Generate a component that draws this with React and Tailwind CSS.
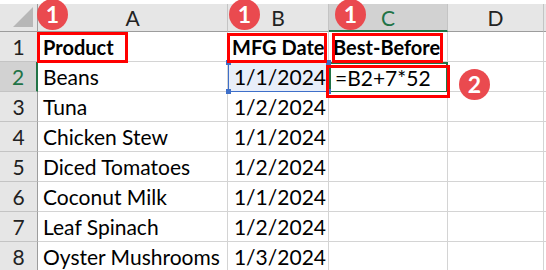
import React from "react";

const cols = ["A", "B", "C", "D", ""];
const rows = [
  ["Product", "MFG Date", "Best-Before", ""],
  ["Beans", "1/1/2024", "=B2+7*52", ""],
  ["Tuna", "1/2/2024", "", ""],
  ["Chicken Stew", "1/1/2024", "", ""],
  ["Diced Tomatoes", "1/2/2024", "", ""],
  ["Coconut Milk", "1/1/2024", "", ""],
  ["Leaf Spinach", "1/2/2024", "", ""],
  ["Oyster Mushrooms", "1/3/2024", "", ""],
];

function Badge({ n, className }) {
  return (
    <div
      className={
        "absolute w-[31px] h-[31px] rounded-full bg-[#ea4a4f] text-white flex items-center justify-center text-[23px] font-bold leading-none " +
        className
      }
    >
      {n}
    </div>
  );
}

export default function App() {
  return (
    <div className="relative w-[546px] h-[270px] overflow-hidden bg-white text-black font-['Lato',sans-serif]">
      <div className="h-[4px] bg-white" />
      <div className="grid grid-cols-[38px_190px_101px_119px_96px_40px] grid-rows-[28px_repeat(8,30px)]">
        <div className="relative bg-[#e6e6e6] border-r border-b border-[#9d9d9d]">
          <svg className="absolute right-[4px] bottom-[4px]" width="20" height="20" viewBox="0 0 20 20">
            <polygon points="20,0 20,20 0,20" fill="#b7b7b7" />
          </svg>
        </div>
        {cols.map((c, i) => (
          <div
            key={c + i}
            className={
              i === 2
                ? "bg-[#d2d2d2] border-r border-r-[#c4c4c4] border-b-2 border-b-[#217346] text-[#217346] flex items-center justify-center text-[21px] pt-[2px]"
                : "bg-[#e6e6e6] border-r border-r-[#c4c4c4] border-b border-b-[#9d9d9d] text-[#222] flex items-center justify-center text-[21px] pt-[1px]"
            }
          >
            {c}
          </div>
        ))}
        {rows.map((r, ri) => (
          <React.Fragment key={ri}>
            <div
              className={
                ri === 1
                  ? "bg-[#d2d2d2] border-r-2 border-r-[#217346] border-b border-b-[#c4c4c4] text-[#217346] flex items-center justify-center text-[21px]"
                  : "bg-[#e6e6e6] border-r border-r-[#9d9d9d] border-b border-b-[#c4c4c4] text-[#222] flex items-center justify-center text-[21px]"
              }
            >
              {ri + 1}
            </div>
            <div className={"border-r border-b border-[#d4d4d4] flex items-center pl-[5px] whitespace-nowrap " + (ri === 0 ? "font-bold text-[20px]" : "text-[21px]")}>
              {r[0]}
            </div>
            <div
              className={
                "relative border-r border-b flex items-center whitespace-nowrap " +
                (ri === 0
                  ? "font-bold text-[20px] pl-[4px] border-[#d4d4d4]"
                  : ri === 1
                  ? "text-[21px] justify-end pr-[2px] bg-[#e8eef9] border-[#3e6fc9] border-l border-t"
                  : "text-[21px] justify-end pr-[2px] border-[#d4d4d4]")
              }
            >
              {r[1]}
              {ri === 1 && (
                <>
                  <span className="absolute -left-[3px] -top-[3px] w-[5px] h-[5px] bg-[#3e6fc9]" />
                  <span className="absolute -right-[3px] -top-[3px] w-[5px] h-[5px] bg-[#3e6fc9]" />
                  <span className="absolute -left-[3px] -bottom-[3px] w-[5px] h-[5px] bg-[#3e6fc9]" />
                  <span className="absolute -right-[3px] -bottom-[3px] w-[5px] h-[5px] bg-[#3e6fc9]" />
                </>
              )}
            </div>
            <div
              className={
                "border-b flex items-center whitespace-nowrap pl-[4px] " +
                (ri === 0
                  ? "font-bold text-[20px] border-r border-[#d4d4d4]"
                  : ri === 1
                  ? "text-[21px] border-2 border-[#217346]"
                  : "text-[21px] border-r border-[#d4d4d4]")
              }
            >
              {r[2]}
            </div>
            <div className="border-r border-b border-[#d4d4d4]" />
            <div className="border-r border-b border-[#d4d4d4]" />
          </React.Fragment>
        ))}
      </div>

      <div className="absolute left-[37px] top-[32px] w-[91px] h-[31px] border-[3px] border-[#ff0000]" />
      <div className="absolute left-[227px] top-[33px] w-[100px] h-[30px] border-[3px] border-[#ff0000]" />
      <div className="absolute left-[332px] top-[33px] w-[111px] h-[30px] border-[3px] border-[#ff0000]" />
      <div className="absolute left-[326px] top-[65px] w-[124px] h-[33px] border-[3px] border-[#ff0000]" />

      <Badge n="1" className="left-[37px] top-[-1px]" />
      <Badge n="1" className="left-[229px] top-[-1px]" />
      <Badge n="1" className="left-[335px] top-[-1px]" />
      <Badge n="2" className="left-[459px] top-[69px]" />
    </div>
  );
}
